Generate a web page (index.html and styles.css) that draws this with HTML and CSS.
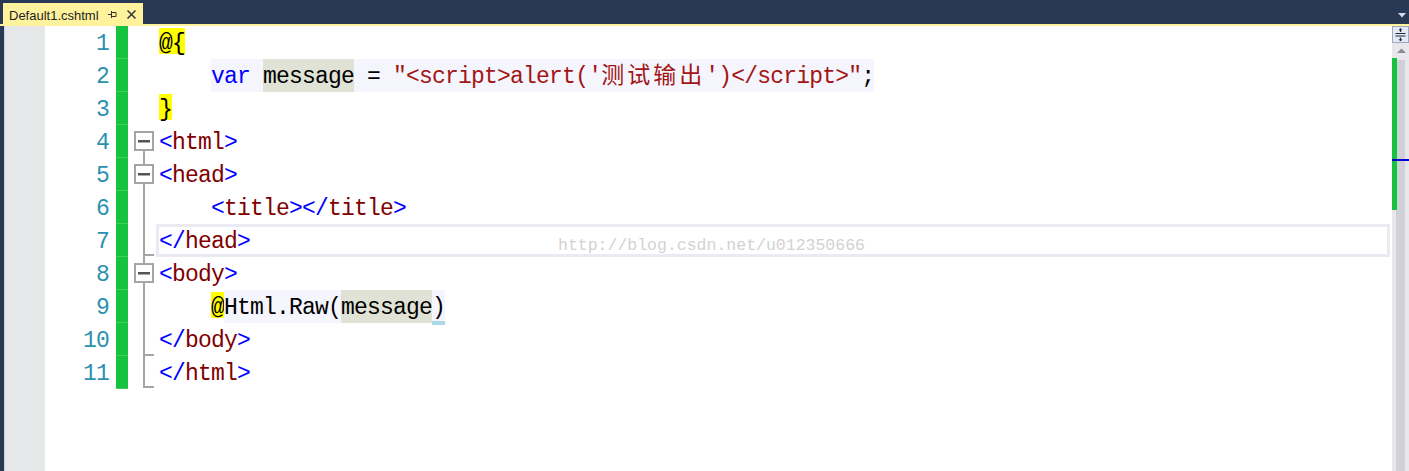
FILE: index.html
```html
<!DOCTYPE html>
<html lang="en">
<head>
    <meta charset="UTF-8">
    <meta name="viewport" content="width=device-width, initial-scale=1.0">
    <title>Default1.cshtml</title>
    <link rel="stylesheet" href="styles.css">
</head>
<body>
    <div class="tabbar">
        <div class="tab">
            <span class="tab-name">Default1.cshtml</span>
            <svg class="pin" viewBox="0 0 10 10"><path d="M1 4.5h3.5M4.5 1v7M4.5 2.5h4.5v4h-4.5" fill="none" stroke="#333" stroke-width="1"/></svg>
            <svg class="close" viewBox="0 0 11 11"><path d="M1.5 1.5l8 8M9.5 1.5l-8 8" stroke="#3a3a3a" stroke-width="1.6"/></svg>
        </div>
        <svg class="dropdown" viewBox="0 0 8 5"><path d="M0 0h8l-4 4.5z" fill="#d5dae6"/></svg>
    </div>
    <div class="tabline"></div>

    <div class="editor">
        <div class="frame"></div>
        <div class="margin"></div>

        <div class="numbers mono">
            <div class="num">1</div>
            <div class="num">2</div>
            <div class="num">3</div>
            <div class="num">4</div>
            <div class="num">5</div>
            <div class="num">6</div>
            <div class="num">7</div>
            <div class="num">8</div>
            <div class="num">9</div>
            <div class="num">10</div>
            <div class="num">11</div>
        </div>

        <div class="changes"></div>

        <!-- outlining margin -->
        <svg class="folds" viewBox="0 0 28 363" width="28" height="363">
            <rect x="15" y="125" width="2" height="237" fill="#a5a5a5"/>
            <rect x="15" y="228" width="11" height="2" fill="#a5a5a5"/>
            <rect x="15" y="328" width="11" height="2" fill="#a5a5a5"/>
            <rect x="15" y="360" width="11" height="2" fill="#a5a5a5"/>
            <rect x="7" y="106" width="18" height="18" fill="#fff" stroke="#a5a5a5" stroke-width="2"/>
            <rect x="10" y="114" width="12" height="2.5" fill="#555"/>
            <rect x="7" y="139" width="18" height="18" fill="#fff" stroke="#a5a5a5" stroke-width="2"/>
            <rect x="10" y="147" width="12" height="2.5" fill="#555"/>
            <rect x="7" y="238" width="18" height="18" fill="#fff" stroke="#a5a5a5" stroke-width="2"/>
            <rect x="10" y="246" width="12" height="2.5" fill="#555"/>
        </svg>

        <div class="code mono">
            <div class="line"><span class="at">@{</span></div>
            <div class="line">    <span class="rz"><span class="kw">var</span> <span class="ref">message</span> = <span class="str">"&lt;script&gt;alert('<span class="cjk">测试输出</span>')&lt;/script&gt;"</span>;</span></div>
            <div class="line"><span class="at">}</span></div>
            <div class="line"><span class="tg">&lt;</span><span class="tn">html</span><span class="tg">&gt;</span></div>
            <div class="line"><span class="tg">&lt;</span><span class="tn">head</span><span class="tg">&gt;</span></div>
            <div class="line">    <span class="tg">&lt;</span><span class="tn">title</span><span class="tg">&gt;&lt;/</span><span class="tn">title</span><span class="tg">&gt;</span></div>
            <div class="line current"><span class="tg">&lt;/</span><span class="tn">head</span><span class="tg">&gt;</span></div>
            <div class="line"><span class="tg">&lt;</span><span class="tn">body</span><span class="tg">&gt;</span></div>
            <div class="line">    <span class="at">@</span><span class="rz">Html.Raw(<span class="ref">message</span><span class="match">)</span></span></div>
            <div class="line"><span class="tg">&lt;/</span><span class="tn">body</span><span class="tg">&gt;</span></div>
            <div class="line"><span class="tg">&lt;/</span><span class="tn">html</span><span class="tg">&gt;</span></div>

            <div class="watermark">http://blog.csdn.net/u012350666</div>
        </div>

        <div class="vscroll">
            <div class="split">
                <svg viewBox="0 0 15 15" width="15" height="15"><path d="M2.5 6.5h10M2.5 9h10M7.5 1.5v3.5M7.5 10.5v3.5" stroke="#1e2b45" stroke-width="1.2" fill="none"/><path d="M5.5 3.2l2-2 2 2zM5.5 12.3l2 2 2-2z" fill="#1e2b45"/></svg>
            </div>
            <div class="up">
                <svg viewBox="0 0 9 5" width="9" height="5"><path d="M0 5l4.5-4.5 4.5 4.5z" fill="#868999"/></svg>
            </div>
            <div class="track">
                <div class="thumb"></div>
                <div class="change-mark"></div>
                <div class="caret-mark"></div>
            </div>
        </div>
    </div>
</body>
</html>
```

FILE: styles.css
```css
body {
    margin: 0;
    background-color: #fff;
    font-family: "Liberation Sans", Arial, sans-serif;
    overflow: hidden;
}

.mono {
    font-family: "Liberation Mono", "Courier New", monospace;
    font-size: 23px;
    letter-spacing: -0.8px;
}

/* tab strip */

.tabbar {
    height: 24px;
    background-color: #293955;
    display: flex;
    justify-content: space-between;
    align-items: flex-start;
    padding-left: 3px;
}

.tab {
    margin-top: 3px;
    width: 140px;
    height: 21px;
    box-sizing: border-box;
    padding: 3px 0 0 6px;
    background-color: #fff29d;
    display: flex;
    align-items: flex-start;
    font-size: 13px;
    line-height: 19px;
    color: #1e1e1e;
}

.tab-name {
    width: 98px;
    white-space: nowrap;
}

.tab .pin {
    width: 10px;
    height: 10px;
    margin-top: 4px;
}

.tab .close {
    width: 11px;
    height: 11px;
    margin-top: 3px;
    margin-left: 9px;
}

.dropdown {
    width: 8px;
    height: 5px;
    margin: 13px 3px 0 0;
}

.tabline {
    height: 2px;
    background-color: #fff29d;
}

/* editor */

.editor {
    display: flex;
    height: 445px;
}

.frame {
    width: 4px;
    background-color: #293955;
    border-right: 1px solid #c9d1e6;
}

.margin {
    width: 40px;
    background-color: #e6e7e8;
}

.numbers {
    width: 64px;
    padding-right: 3px;
    text-align: right;
    color: #2b91af;
}

.num {
    height: 33px;
    line-height: 37px;
}

.changes {
    margin-left: 4px;
    width: 12px;
    height: 363px;
    background: repeating-linear-gradient(#17c23f 0, #17c23f 32px, #3ccf5e 32px, #3ccf5e 33px);
}

.folds {
    display: block;
    flex-shrink: 0;
}

.code {
    flex: 1;
    position: relative;
    color: #000;
}

.line {
    height: 33px;
    line-height: 37px;
    padding-left: 3px;
    white-space: pre;
}

.line.current {
    box-sizing: border-box;
    border: 3px solid #eaeaf2;
    padding-left: 0;
    line-height: 31px;
}

.at {
    display: inline-block;
    vertical-align: top;
    height: 26px;
    margin-top: 2px;
    line-height: 33px;
    background-color: #ffff00;
}

.rz {
    display: inline-block;
    vertical-align: top;
    height: 33px;
    background-color: #f5f5fe;
}

.ref {
    display: inline-block;
    vertical-align: top;
    height: 33px;
    background-color: #e0e2d6;
}

.match {
    display: inline-block;
    vertical-align: top;
    height: 35px;
    background: linear-gradient(#add6e6, #add6e6) bottom / 100% 4px no-repeat;
}

.kw { color: #0000ff; }
.str { color: #a31515; }
.tg { color: #0000ff; }
.tn { color: #800000; }

.cjk {
    font-family: "Noto Sans CJK SC", sans-serif;
    font-size: 23px;
    letter-spacing: 3px;
    line-height: 1;
}

.watermark {
    position: absolute;
    left: 402px;
    top: 210px;
    font-size: 16.5px;
    letter-spacing: 0;
    line-height: 20px;
    color: #d2d2d2;
    white-space: nowrap;
}

/* vertical scrollbar */

.vscroll {
    margin-left: 2px;
    width: 17px;
    background-color: #e8e8ec;
    display: flex;
    flex-direction: column;
}

.split {
    height: 17px;
    box-sizing: border-box;
    border: 1px solid #a0a8be;
    background-color: #e4e9f5;
}

.split svg {
    display: block;
}

.up {
    height: 14px;
    display: flex;
    justify-content: center;
    align-items: center;
}

.up svg {
    margin-left: 1px;
}

.track {
    flex: 1;
    position: relative;
}

.thumb {
    position: absolute;
    left: 4px;
    top: 3px;
    bottom: 0;
    width: 9px;
    background-color: #d0d1d7;
}

.change-mark {
    position: absolute;
    left: 0;
    top: 1px;
    width: 5px;
    height: 152px;
    background-color: #17c23f;
}

.caret-mark {
    position: absolute;
    left: 0;
    right: 0;
    top: 102px;
    height: 2px;
    background-color: #0000cd;
}
```
